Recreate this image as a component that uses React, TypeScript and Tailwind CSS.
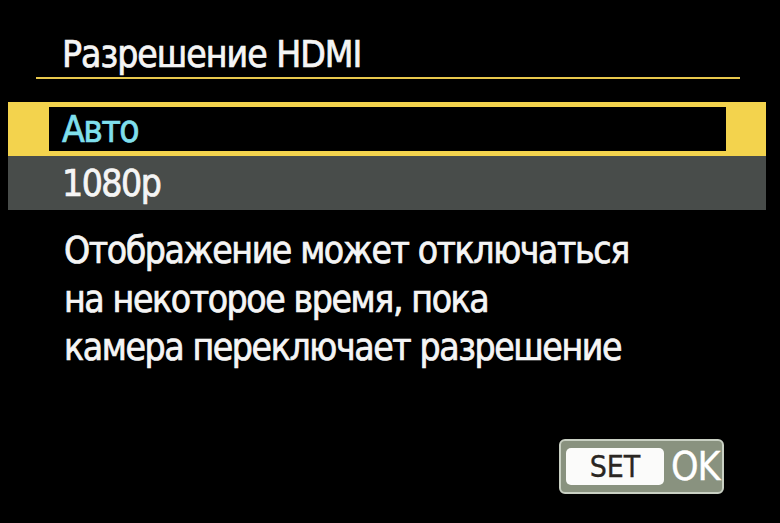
export default function App() {
  const font = { fontFamily: '"Liberation Sans Narrow", "DejaVu Sans Condensed", "Liberation Sans", sans-serif' };
  return (
    <div
      className="w-[780px] h-[523px] bg-black overflow-hidden flex flex-col text-[#f5f5f5] [-webkit-text-stroke:0.7px_currentColor]"
      style={font}
    >
      {/* title */}
      <div className="h-[77px] pl-[62px] pt-[36px] text-[37px] leading-none tracking-[-1px]">Разрешение HDMI</div>
      <div className="ml-[36px] w-[704px] h-[2px] bg-[#e8c84c]" />

      {/* options */}
      <div className="mt-[23px] ml-[8px] w-[758px] flex flex-col">
        <div className="bg-[#f3d34d] pt-[5px] pb-[5px] pl-[41px] pr-[40px]">
          <div className="h-[44px] bg-black pl-[13px] flex items-center text-[37px] leading-none tracking-[-1.5px] text-[#7fdfec]">
            Авто
          </div>
        </div>
        <div className="h-[54px] bg-[#484c4a] pl-[54px] flex items-center text-[37px] leading-none tracking-[-1.5px]">1080p</div>
      </div>

      {/* description */}
      <div className="mt-[17px] pl-[64px] text-[37px] leading-[48.5px] tracking-[-1.4px]">
        <div>Отображение может отключаться</div>
        <div>на некоторое время, пока</div>
        <div>камера переключает разрешение</div>
      </div>

      {/* SET OK */}
      <div className="mt-auto mb-[29px] mr-[56px] self-end">
        <div className="w-[165px] h-[55px] rounded-[6px] border-[2px] border-[#c9d0c3] bg-[#89927f] flex items-center pl-[5px] gap-[7px]">
          <div className="w-[98px] h-[37px] rounded-[5px] bg-[#fbfbfa] flex items-center justify-center text-[30px] leading-none text-[#2a2622] [-webkit-text-stroke:0.3px_currentColor]">
            SET
          </div>
          <div className="text-[39px] leading-none tracking-[-1px] text-white [-webkit-text-stroke:0.3px_currentColor]">OK</div>
        </div>
      </div>
    </div>
  );
}
